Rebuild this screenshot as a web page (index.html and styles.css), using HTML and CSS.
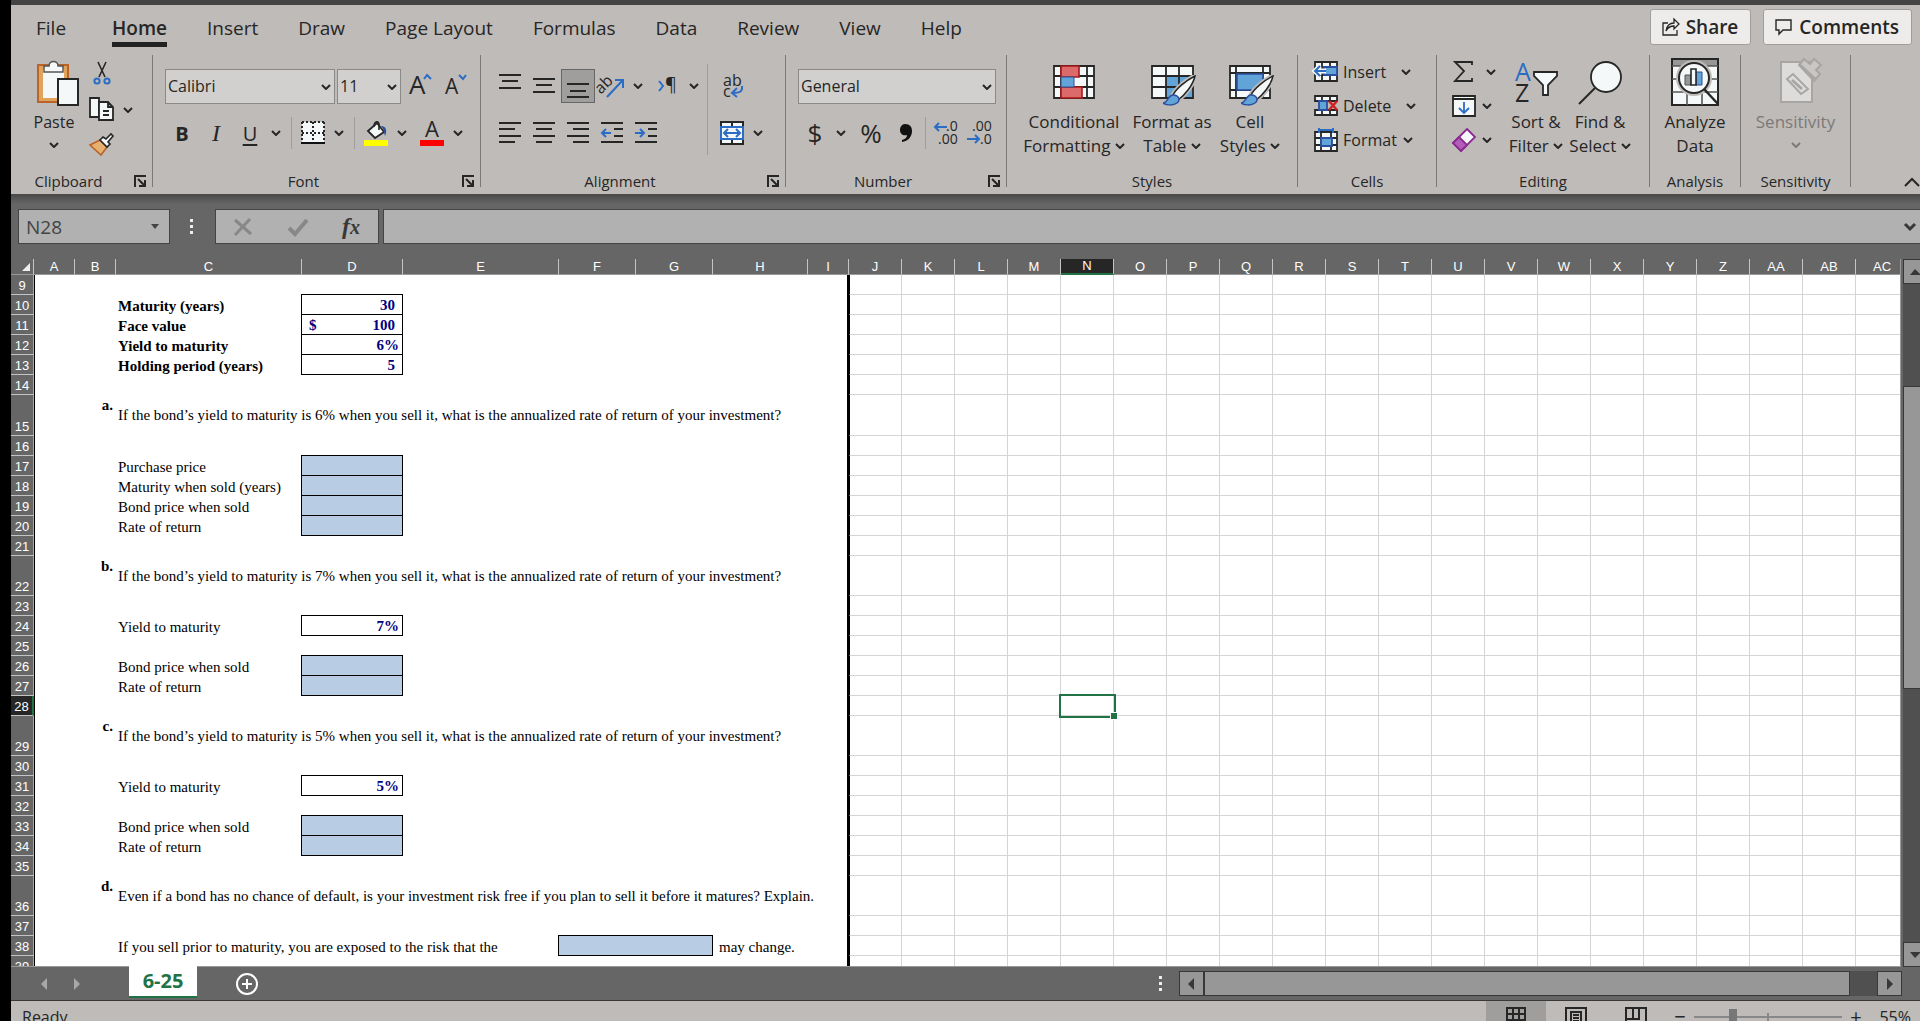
FILE: index.html
```html
<!DOCTYPE html>
<html lang="en">
  <head>
    <meta charset="UTF-8">
    <meta name="viewport" content="width=device-width, initial-scale=1">
    <title>6-25</title>
    <link rel="stylesheet" href="styles.css">
  </head>
  <body>
    <svg class="sprite">
      <symbol id="chev" viewBox="0 0 10 6"><path d="M1 1l4 4 4-4" fill="none" stroke="currentColor" stroke-width="2"/></symbol>
      <symbol id="launch" viewBox="0 0 12 12"><path d="M1 12V1h11M4 4l6 6M11 5v6H5" fill="none" stroke="#262626" stroke-width="2"/></symbol>
      <symbol id="brush" viewBox="0 0 34 32">
        <path d="M32 1C22 6 13 14 10 20l5 5C22 20 30 10 32 1z" fill="#f4f8f8" stroke="#bfbbb8" stroke-width="5"/>
        <path d="M32 1C22 6 13 14 10 20l5 5C22 20 30 10 32 1z" fill="#f4f8f8" stroke="#262626" stroke-width="1.5"/>
        <path d="M0 28c5 0 5-9 11-8 6 1 6 6 3 8-4 3-11 2-14 0z" fill="#62a3d8" stroke="#2b50a0" stroke-width="1.5"/>
      </symbol>
    </svg>

    <div id="app">
      <div id="ribbon">
        <nav class="tabs">
          <a href="#" class="file">File</a>
          <a href="#" class="active">Home</a>
          <a href="#">Insert</a>
          <a href="#">Draw</a>
          <a href="#">Page Layout</a>
          <a href="#">Formulas</a>
          <a href="#">Data</a>
          <a href="#">Review</a>
          <a href="#">View</a>
          <a href="#">Help</a>
          <div class="tab-actions">
            <button><svg width="18" height="18" fill="none" stroke="#262626" stroke-width="1.3"><path d="M6 5H1v12h14v-5M4 13c1-6 4-8 8-8V1l5 5-5 5V8c-4 0-6 1-8 5z"/></svg>Share</button>
            <button><svg width="18" height="18" fill="none" stroke="#262626" stroke-width="1.4"><path d="M1 2h15v10H8l-4 4v-4H1z"/></svg>Comments</button>
          </div>
        </nav>

        <div class="groups">
          <section class="group clipboard">
            <div class="body">
              <button class="big paste">
                <svg class="icon48" viewBox="0 0 48 48">
                  <path d="M8 7h30v37H8z" fill="#e0a35c" stroke="#b8642a" stroke-width="2"/>
                  <path d="M13 11h21v29H13z" fill="#f4f8f8"/>
                  <path d="M14 14V8h5c0-6 9-6 9 0h5v6z" fill="#f4f8f8" stroke="#555" stroke-width="1.5"/>
                  <path d="M28 21h20v26H28z" fill="#f4f8f8" stroke="#262626" stroke-width="2"/>
                </svg>
                <span>Paste</span>
                <svg class="chev"><use href="#chev"/></svg>
              </button>
              <div class="stack small">
                <button aria-label="Cut"><svg width="18" height="26" fill="none" stroke-width="1.6"><path d="M5 2l7 15M13 2L6 17" stroke="#262626"/><g stroke="#2b6cc4" stroke-width="2"><circle cx="4" cy="21" r="2.6"/><circle cx="14" cy="21" r="2.6"/></g></svg></button>
                <button aria-label="Copy"><svg width="26" height="26" fill="#f4f8f8" stroke="#262626" stroke-width="1.8"><path d="M1 2h9v19H1z"/><path d="M10 6h9l5 5v13H10zM19 6v5h5M14 15h6M14 19h6"/></svg></button>
                <button aria-label="Format painter"><svg width="26" height="24" stroke-width="1.6"><path d="M1 12l10-5 7 7-6 8z" fill="#e8b070" stroke="#b8642a"/><path d="M11 7l3-3 3 2 5-5 2 2-5 6 2 2-3 3z" fill="#f4f8f8" stroke="#262626"/></svg></button>
              </div>
              <svg class="chev copy-chev"><use href="#chev"/></svg>
            </div>
            <footer><span>Clipboard</span><svg class="launch"><use href="#launch"/></svg></footer>
          </section>

          <section class="group font">
            <div class="body rows">
              <div class="row combos">
                <div class="combo font-name"><select aria-label="Font"><option>Calibri</option></select><svg class="chev"><use href="#chev"/></svg></div>
                <div class="combo font-size"><select aria-label="Font size"><option>11</option></select><svg class="chev"><use href="#chev"/></svg></div>
                <button class="tool"><svg width="26" height="26"><text x="2" y="21" font-size="26">A</text><path d="M17 6l3-4 4 4" fill="none" stroke="#2b6cc4" stroke-width="2"/></svg></button>
                <button class="tool"><svg width="26" height="26"><text x="2" y="21" font-size="21">A</text><path d="M16 2l4 4 3-4" fill="none" stroke="#2b6cc4" stroke-width="2"/></svg></button>
              </div>
              <div class="row">
                <button class="tool bold">B</button>
                <button class="tool italic">I</button>
                <button class="tool under">U</button>
                <svg class="chev"><use href="#chev"/></svg>
                <i class="sep"></i>
                <button class="tool" aria-label="Borders"><svg width="24" height="24"><path d="M1 1h22v22H1z" fill="#f4f8f8"/><path d="M1 1h22M1 12h22M1 1v20M12 1v20M23 1v20" stroke="#262626" stroke-width="2" stroke-dasharray="2 2"/><path d="M0 22h24" stroke="#111" stroke-width="2"/></svg></button>
                <svg class="chev"><use href="#chev"/></svg>
                <i class="sep"></i>
                <button class="tool" aria-label="Fill color"><svg width="24" height="26"><path d="M4 11l9-8 7 9-9 6z" fill="#f4f8f8" stroke="#262626" stroke-width="1.8"/><path d="M10 7c0-6 5-7 5-2v5" fill="none" stroke="#262626" stroke-width="1.6"/><path d="M17 6c6 0 6 6 4 10-1-4-1-7-4-10z" fill="#2b50a0"/><path d="M0 20h24v6H0z" fill="#ff0"/></svg></button>
                <svg class="chev"><use href="#chev"/></svg>
                <button class="tool color"><svg width="24" height="26"><text x="5" y="17" font-size="22">A</text><path d="M0 20h24v6H0z" fill="red"/></svg></button>
                <svg class="chev"><use href="#chev"/></svg>
              </div>
            </div>
            <footer><span>Font</span><svg class="launch"><use href="#launch"/></svg></footer>
          </section>

          <section class="group alignment">
            <div class="body">
              <div class="rows">
                <div class="row">
                  <button class="tool" aria-label="Top align"><svg class="lines" width="22" height="24"><path d="M0 1h22M3 7h16M0 14h22"/></svg></button>
                  <button class="tool" aria-label="Middle align"><svg class="lines" width="22" height="24"><path d="M0 5h22M3 11h16M0 18h22"/></svg></button>
                  <button class="tool pressed" aria-label="Bottom align"><svg class="lines" width="22" height="24"><path d="M0 10h22M3 17h16M0 23h22"/></svg></button>
                  <button class="tool"><svg width="26" height="26"><text x="-2" y="15" font-size="16" transform="rotate(-45 8 14)">ab</text><path d="M8 24L23 8M16 7h8v8" fill="none" stroke="#2b6cc4" stroke-width="2"/></svg></button>
                  <svg class="chev"><use href="#chev"/></svg>
                  <button class="tool rtl"><svg width="20" height="20"><path d="M1 5l4 5-4 5" fill="none" stroke="#2b6cc4" stroke-width="2"/><text x="7" y="15" font-size="18">¶</text></svg></button>
                  <svg class="chev"><use href="#chev"/></svg>
                </div>
                <div class="row">
                  <button class="tool" aria-label="Align left"><svg class="lines" width="22" height="22"><path d="M0 1h22M0 7h16M0 14h22M0 20h16"/></svg></button>
                  <button class="tool" aria-label="Center"><svg class="lines" width="22" height="22"><path d="M0 1h22M3 7h16M0 14h22M3 20h16"/></svg></button>
                  <button class="tool" aria-label="Align right"><svg class="lines" width="22" height="22"><path d="M0 1h22M6 7h16M0 14h22M6 20h16"/></svg></button>
                  <button class="tool" aria-label="Decrease indent"><svg class="lines" width="22" height="22"><path d="M0 1h22M13 7h9M13 14h9M0 20h22"/><path class="blue" d="M10 11H1M5 7l-4 4 4 4"/></svg></button>
                  <button class="tool" aria-label="Increase indent"><svg class="lines" width="22" height="22"><path d="M0 1h22M13 7h9M13 14h9M0 20h22"/><path class="blue" d="M0 11h9M5 7l4 4-4 4"/></svg></button>
                </div>
              </div>
              <i class="sep tall"></i>
              <div class="rows wrap">
                <div class="row">
                  <button class="tool"><svg width="24" height="26"><text x="3" y="13" font-size="16">ab</text><text x="3" y="24" font-size="16">c</text><path d="M22 13c1 6-3 7-9 7M17 15l-5 5 5 4" fill="none" stroke="#2b6cc4" stroke-width="2"/></svg></button>
                </div>
                <div class="row">
                  <button class="tool" aria-label="Merge and center"><svg width="24" height="24" fill="#f4f8f8" stroke="#262626" stroke-width="2"><path d="M1 1h22v22H1zM12 1v22"/><path d="M1 6h22v12H1z" stroke="#2b6cc4"/><path d="M4 12h16M8 8l-4 4 4 4M16 8l4 4-4 4" fill="none" stroke="#2b6cc4"/></svg></button>
                  <svg class="chev"><use href="#chev"/></svg>
                </div>
              </div>
            </div>
            <footer><span>Alignment</span><svg class="launch"><use href="#launch"/></svg></footer>
          </section>

          <section class="group number">
            <div class="body rows">
              <div class="row combos">
                <div class="combo format"><select aria-label="Number format"><option>General</option></select><svg class="chev"><use href="#chev"/></svg></div>
              </div>
              <div class="row">
                <button class="tool glyph">$</button>
                <svg class="chev"><use href="#chev"/></svg>
                <button class="tool glyph percent-style">%</button>
                <button class="tool" aria-label="Comma style"><svg width="14" height="20"><path d="M6 1c5 0 7 3 7 7 0 6-4 10-10 11v-2c3-1 5-2 5-5C4 13 1 11 1 7c0-3 2-6 5-6z" fill="#111"/></svg></button>
                <i class="sep"></i>
                <button class="tool"><svg width="26" height="26"><text x="13" y="11" font-size="14">.0</text><text x="5" y="24" font-size="14">.00</text><path d="M14 7H2M6 3L2 7l4 4" fill="none" stroke="#2b6cc4" stroke-width="2"/></svg></button>
                <button class="tool"><svg width="26" height="26"><text x="5" y="11" font-size="14">.00</text><text x="13" y="24" font-size="14">.0</text><path d="M0 19h12M8 15l4 4-4 4" fill="none" stroke="#2b6cc4" stroke-width="2"/></svg></button>
              </div>
            </div>
            <footer><span>Number</span><svg class="launch"><use href="#launch"/></svg></footer>
          </section>

          <section class="group styles">
            <div class="body">
              <button class="big conditional">
                <svg class="icon48" viewBox="0 0 48 48">
                  <path d="M4 8h40v32H4zM4 18h40M4 29h40M11 8v32M37 8v32" fill="#f4f8f8" stroke="#262626" stroke-width="1.8"/>
                  <path d="M11 8h18v11H11zM11 29h21v11H11z" fill="#dc6a6a" stroke="#a81818" stroke-width="1.6"/>
                  <path d="M11 19h13v10H11z" fill="#62a3d8" stroke="#2b50a0"/>
                </svg>
                <span>Conditional</span>
                <span>Formatting <svg class="chev"><use href="#chev"/></svg></span>
              </button>
              <button class="big as-table">
                <svg class="icon48" viewBox="0 0 48 48">
                  <path d="M4 8h41v32H4z" fill="#f4f8f8"/><path d="M18 18h27v22H18z" fill="#62a3d8"/>
                  <path d="M4 8h41v32H4zM4 18h41M4 29h41M18 8v32M31 8v32" fill="none" stroke="#262626" stroke-width="1.8"/>
                  <use href="#brush" x="15" y="17" width="34" height="32"/>
                </svg>
                <span>Format as</span>
                <span>Table <svg class="chev"><use href="#chev"/></svg></span>
              </button>
              <button class="big cell-styles">
                <svg class="icon48" viewBox="0 0 48 48">
                  <path d="M4 8h40v32H4zM4 15h40M4 32h40M10 8v32M37 8v32" fill="#f4f8f8" stroke="#262626" stroke-width="1.8"/>
                  <path d="M11 16h26v16H11z" fill="#62a3d8" stroke="#2b50a0" stroke-width="1.6"/>
                  <use href="#brush" x="15" y="17" width="34" height="32"/>
                </svg>
                <span>Cell</span>
                <span>Styles <svg class="chev"><use href="#chev"/></svg></span>
              </button>
            </div>
            <footer><span>Styles</span></footer>
          </section>

          <section class="group cells">
            <div class="body">
              <div class="stack">
                <button><svg width="25" height="24" fill="#f4f8f8" stroke="#262626" stroke-width="1.8"><path d="M1 2h22v19H1zM1 8h22M1 15h22M8 2v19M16 2v19"/><path d="M10 7h13v8H10z" fill="#62a3d8" stroke="#2b50a0"/><path d="M12 11H1M6 6l-5 5 5 5" fill="none" stroke="#f4f8f8" stroke-width="5"/><path d="M12 11H1M6 6l-5 5 5 5" fill="none" stroke="#2b6cc4" stroke-width="2"/></svg>Insert<svg class="chev"><use href="#chev"/></svg></button>
                <button><svg width="25" height="24" fill="#f4f8f8" stroke="#262626" stroke-width="1.8"><path d="M1 2h22v5H1zM1 16h22v5H1zM8 2v5M16 2v5M8 16v5M16 16v5"/><path d="M5 7h8v9H5z" fill="#62a3d8" stroke="#2b50a0"/><path d="M15 7l8 9M23 7l-8 9" stroke="#d02020" stroke-width="2.5"/></svg>Delete<svg class="chev"><use href="#chev"/></svg></button>
                <button class="tight"><svg width="25" height="26" fill="#f4f8f8" stroke="#262626" stroke-width="1.8"><path d="M1 5h22v19H1zM1 11h22M1 18h22M7 5v19M17 5v19"/><path d="M7 11h11v8H7z" fill="#62a3d8" stroke="#2b50a0"/><path d="M5 1v5M19 1v5M5 3h14" stroke="#2b6cc4" stroke-width="2"/></svg>Format<svg class="chev"><use href="#chev"/></svg></button>
              </div>
            </div>
            <footer><span>Cells</span></footer>
          </section>

          <section class="group editing">
            <div class="body">
              <div class="stack icons">
                <button class="sum" aria-label="AutoSum"><svg width="24" height="24"><path d="M20 5V2H3l9 9-9 10h17v-3" fill="none" stroke="#262626" stroke-width="1.8"/></svg><svg class="chev"><use href="#chev"/></svg></button>
                <button aria-label="Fill"><svg width="24" height="22" fill="#f4f8f8" stroke="#262626" stroke-width="1.8"><path d="M1 1h22v20H1zM1 4h22"/><path d="M12 7v11M7 13l5 5 5-5" fill="none" stroke="#2b6cc4"/></svg><svg class="chev"><use href="#chev"/></svg></button>
                <button aria-label="Clear"><svg width="24" height="24" fill="#f4f8f8" stroke="#8a2a90" stroke-width="1.8"><path d="M15 1l8 8L9 23l-8-8z"/><path d="M7 9l8 8-6 6-8-8z" fill="#b45cba"/></svg><svg class="chev"><use href="#chev"/></svg></button>
              </div>
              <button class="big sort">
                <svg class="icon48" viewBox="0 0 48 48"><text class="blue-text" x="3" y="23" font-size="25">A</text><text x="3" y="44" font-size="25">Z</text><path d="M22 14h23v4l-9 9v10h-5V27l-9-9z" fill="#f4f8f8" stroke="#262626" stroke-width="1.8"/></svg>
                <span>Sort &amp;</span>
                <span>Filter <svg class="chev"><use href="#chev"/></svg></span>
              </button>
              <button class="big find">
                <svg class="icon48" viewBox="0 0 48 48"><circle cx="30" cy="19" r="15" fill="#f4f8f8" stroke="#262626" stroke-width="1.8"/><path d="M19 30L3 46" stroke="#262626" stroke-width="2"/></svg>
                <span>Find &amp;</span>
                <span>Select <svg class="chev"><use href="#chev"/></svg></span>
              </button>
            </div>
            <footer><span>Editing</span></footer>
          </section>

          <section class="group analysis">
            <div class="body">
              <button class="big">
                <svg class="icon48" viewBox="0 0 48 48">
                  <path d="M1 1h46v46H1z" fill="#f4f8f8" stroke="#262626" stroke-width="2"/><path d="M2 2h44v6H2z" fill="#979797"/>
                  <path d="M1 8h46M1 21h46M1 34h46M16 34v13M31 34v13" stroke="#555" stroke-width="1.6"/>
                  <circle cx="23" cy="20" r="18" fill="#bfbbb8"/><circle cx="23" cy="20" r="15" fill="#f4f8f8" stroke="#262626" stroke-width="2"/>
                  <path d="M33 31l14 15" stroke="#262626" stroke-width="2.5"/>
                  <path d="M14 17h6v10h-6z" fill="#979797" stroke="#555"/><path d="M25 14h6v13h-6z" fill="#62a3d8" stroke="#2b50a0"/><path d="M20 11h5v16h-5z" fill="#f4f8f8" stroke="#262626" stroke-width="1.6"/>
                </svg>
                <span>Analyze</span>
                <span>Data</span>
              </button>
            </div>
            <footer><span>Analysis</span></footer>
          </section>

          <section class="group sensitivity">
            <div class="body">
              <button class="big" disabled>
                <svg class="icon48" viewBox="0 0 48 48" stroke="#a8a6a4" stroke-width="2">
                  <path d="M9 4h31v40H9z" fill="#dedcdb"/>
                  <path d="M15 21l6-5 15 15-7 5z" fill="#dedcdb"/><path d="M20 22l10 9" stroke-width="3"/>
                  <path d="M27 7l5-6 6 5 4-5 7 6-5 5 4 4-6 7z" fill="#c9c7c5"/><path d="M28 7l15 14" stroke-width="3"/>
                </svg>
                <span>Sensitivity</span>
                <svg class="chev"><use href="#chev"/></svg>
              </button>
            </div>
            <footer><span>Sensitivity</span></footer>
          </section>
          <button class="collapse" aria-label="Collapse the ribbon"><svg width="16" height="10"><path d="M1 9l7-7 7 7" fill="none" stroke="#262626" stroke-width="2"/></svg></button>
        </div>
      </div>

      <div id="formula-bar">
        <div class="name-box">
          <input type="text" value="N28" aria-label="Name box">
          <svg width="8" height="5"><path d="M0 0h8L4 5z" fill="#444"/></svg>
        </div>
        <div class="dots"><i></i><i></i><i></i></div>
        <div class="fx">
          <button aria-label="Cancel"><svg width="18" height="18"><path d="M1 2l16 14M16 1L1 17" stroke="#888" stroke-width="3"/></svg></button>
          <button aria-label="Enter"><svg width="20" height="18"><path d="M1 10l6 6L19 2" fill="none" stroke="#888" stroke-width="4"/></svg></button>
          <button class="fn" aria-label="Insert function">f<small>x</small></button>
        </div>
        <div class="formula">
          <input type="text" aria-label="Formula">
          <svg width="12" height="8"><path d="M1 1l5 5 5-5" fill="none" stroke="#383838" stroke-width="3"/></svg>
        </div>
      </div>

      <div id="sheet">
        <div class="grid"><table id="cells"></table></div>
        <div class="vscroll">
          <button aria-label="Scroll up"><svg width="11" height="6"><path d="M0 6h11L5 0z"/></svg></button>
          <div class="track"><div class="thumb"></div></div>
          <button aria-label="Scroll down"><svg width="11" height="6"><path d="M0 0h11L5 6z"/></svg></button>
        </div>
      </div>

      <div id="sheet-bar">
        <button class="nav" aria-label="Previous sheet"><svg width="6" height="12"><path d="M6 0v12L0 6z"/></svg></button>
        <button class="nav" aria-label="Next sheet"><svg width="6" height="12"><path d="M0 0v12l6-6z"/></svg></button>
        <a href="#" class="sheet-tab">6-25</a>
        <button class="add" aria-label="New sheet"><svg width="24" height="24" fill="none" stroke="#fff" stroke-width="2"><circle cx="12" cy="12" r="10"/><path d="M12 7v10M7 12h10"/></svg></button>
        <div class="dots"><i></i><i></i><i></i></div>
        <div class="hscroll">
          <button aria-label="Scroll left"><svg width="6" height="12"><path d="M6 0v12L0 6z"/></svg></button>
          <div class="track"><div class="thumb"></div></div>
          <button aria-label="Scroll right"><svg width="6" height="12"><path d="M0 0v12l6-6z"/></svg></button>
        </div>
      </div>

      <div id="status">
        <div class="status-row">
          <span class="ready">Ready</span>
          <button class="view on" aria-label="Normal"><svg width="20" height="20"><path d="M1 1h18v18H1zM7 1v18M13 1v18M1 7h18M1 13h18"/></svg></button>
          <button class="view" aria-label="Page layout"><svg width="22" height="20"><path d="M1 1h20v18H1zM6 19V5h10v14M8 8h6M8 11h6M8 14h6"/></svg></button>
          <button class="view" aria-label="Page break preview"><svg width="22" height="20"><path d="M1 1h20v18H1zM8 1v11M14 1v11H1"/></svg></button>
          <button class="zoom">−</button>
          <input type="range" min="10" max="190" value="55" aria-label="Zoom">
          <button class="zoom">+</button>
          <span class="percent">55%</span>
        </div>
      </div>
    </div>

    <script src="index.js"></script>
  </body>
</html>
```
FILE: styles.css
```css
* {
  box-sizing: border-box;
}

body {
  margin: 0;
  background: #000;
  color: #262626;
  font-family: "Open Sans", "Noto Sans", sans-serif;
  font-size: 16px;
  overflow: hidden;
}

button {
  background: none;
  border: 0;
  padding: 0;
  margin: 0;
  font: inherit;
  color: inherit;
}

svg {
  flex-shrink: 0;
  overflow: visible;
}

svg text {
  fill: #262626;
}

svg .blue-text {
  fill: #2b6cc4;
}

.sprite {
  position: absolute;
  width: 0;
  height: 0;
}

#app {
  display: flex;
  flex-direction: column;
  height: 100vh;
  margin-left: 11px;
  background: #666;
}

/* ribbon */

#ribbon {
  background: #bfbbb8;
  border-top: 5px solid #444;
  height: 194px;
  flex-shrink: 0;
}

.tabs {
  display: flex;
  gap: 40px;
  height: 50px;
  padding: 0 8px 0 25px;
}

.tabs a {
  height: 42px;
  padding-top: 9px;
  line-height: 28px;
  font-size: 19px;
  color: inherit;
  text-decoration: none;
  border-bottom: 5px solid transparent;
  white-space: nowrap;
}

.tabs .file {
  margin-right: 6px;
}

.tabs .active {
  font-weight: 600;
  border-color: #222;
}

.tab-actions {
  display: flex;
  gap: 12px;
  margin-left: auto;
  padding-top: 4px;
}

.tab-actions button {
  display: flex;
  align-items: center;
  gap: 6px;
  height: 36px;
  padding: 0 12px 0 11px;
  background: #edecea;
  border: 1px solid #a09e9c;
  border-radius: 3px;
  font-size: 19px;
  font-weight: 600;
}

.groups {
  display: flex;
  height: 132px;
}

.group {
  display: flex;
  flex-direction: column;
  flex-shrink: 0;
  border-right: 1px solid #7c7a78;
}

.group .body {
  flex: 1;
  display: flex;
  align-items: flex-start;
}

.group footer {
  display: flex;
  height: 14px;
  line-height: 16px;
  font-size: 15px;
}

.group footer span {
  flex: 1;
  text-align: center;
}

.launch {
  width: 12px;
  height: 12px;
  margin: 2px 6px 0 8px;
}

.clipboard { width: 142px; }
.font { width: 328px; }
.alignment { width: 305px; }
.number { width: 221px; }
.styles { width: 291px; }
.cells { width: 139px; }
.editing { width: 213px; }
.analysis { width: 91px; }
.sensitivity { width: 110px; }

.chev {
  width: 10px;
  height: 6px;
}

.row > .chev {
  margin: 0 4px;
}

.group .rows {
  display: flex;
  flex-direction: column;
  gap: 13px;
  padding: 14px 0 0 12px;
}

.row {
  display: flex;
  align-items: center;
  height: 34px;
}

.combos {
  gap: 2px;
}

.tool {
  display: flex;
  align-items: center;
  justify-content: center;
  width: 34px;
  height: 34px;
  font-size: 20px;
}

.bold { font-weight: 700; }
.italic { font-family: "Liberation Serif", serif; font-style: italic; font-size: 24px; }
.under { text-decoration: underline; text-underline-offset: 3px; }
.color { margin-left: 4px; }
.rtl { margin-left: 4px; }
.glyph { font-size: 26px; }
.percent-style { margin: 0 1px 0 4px; }

.pressed {
  background: #9f9e9c;
  border: 1px solid #666;
}

.sep {
  width: 1px;
  height: 32px;
  margin: 0 4px 0 6px;
  background: #a09e9c;
}

.number .sep {
  margin: 0 3px 0 2px;
}

.sep.tall {
  height: 91px;
  margin: 9px 0 0 4px;
}

.alignment .wrap {
  padding-left: 7px;
}

.lines {
  fill: none;
  stroke: #262626;
  stroke-width: 2;
}

.lines .blue {
  stroke: #2b6cc4;
}

.combo {
  position: relative;
}

.combo .chev {
  position: absolute;
  right: 4px;
  top: 15px;
  pointer-events: none;
}

.combo select {
  appearance: none;
  width: 100%;
  height: 35px;
  padding: 0 2px;
  background: #d1d0ce;
  border: 1px solid #8c8a88;
  border-radius: 0;
  font: inherit;
  color: inherit;
}

.font-name { width: 170px; }
.font-size { width: 64px; }
.format { width: 198px; }

.big {
  display: flex;
  flex-direction: column;
  align-items: center;
  padding-top: 3px;
  font-size: 17px;
  line-height: 24px;
  white-space: nowrap;
}

.big:disabled {
  color: #7c7a78;
}

.big > .chev {
  margin-top: 8px;
}

.big span .chev {
  margin-bottom: 3px;
}

.icon48 {
  width: 48px;
  height: 48px;
  margin-bottom: 4px;
}

.paste { width: 48px; margin-left: 19px; font-size: 16px; }
.conditional { width: 108px; margin-left: 13px; }
.as-table { width: 88px; }
.cell-styles { width: 68px; }
.sort { width: 62px; margin-left: 9px; }
.find { width: 66px; }
.analysis .big, .sensitivity .big { width: 100%; }

.stack {
  display: flex;
  flex-direction: column;
}

.stack button {
  display: flex;
  align-items: center;
  height: 34px;
}

.small {
  margin-left: 11px;
  width: 26px;
}

.small button {
  height: 36px;
  justify-content: center;
}

.copy-chev {
  margin: 52px 0 0 8px;
}

.cells .stack {
  margin-left: 16px;
}

.cells .chev { margin-left: 15px; }
.cells .tight .chev { margin-left: 6px; }

.cells button svg:first-child {
  margin-right: 4px;
}

.icons {
  margin-left: 15px;
}

.icons .chev {
  margin-left: 6px;
}

.icons .sum .chev {
  margin-left: 10px;
}

.collapse {
  display: flex;
  align-items: flex-end;
  margin-left: auto;
}

/* formula bar */

#formula-bar {
  display: flex;
  flex-shrink: 0;
  height: 65px;
  padding: 15px 0;
  background: linear-gradient(#484848, #666 10px);
}

.name-box, .fx, .formula {
  display: flex;
  align-items: center;
  background: #b1b1b1;
  border: 1px solid #444;
}

#formula-bar input {
  flex: 1;
  min-width: 0;
  padding: 0 7px;
  background: none;
  border: 0;
  outline: none;
  font: inherit;
  font-size: 19px;
  color: #444;
}

.name-box {
  width: 152px;
  margin-left: 7px;
  padding-right: 10px;
}

.dots {
  display: flex;
  flex-direction: column;
  justify-content: center;
  gap: 3px;
}

.dots i {
  width: 3px;
  height: 3px;
  background: #eee;
}

#formula-bar .dots {
  margin: 0 22px 0 20px;
}

.fx {
  width: 164px;
  padding-left: 18px;
}

.fx button {
  width: 20px;
  margin-right: 34px;
  display: flex;
}

.fx .fn {
  margin: 0;
  align-items: baseline;
  font-family: "Liberation Serif", serif;
  font-style: italic;
  font-weight: 700;
  font-size: 24px;
  color: #383838;
}

.fn small {
  font-size: 20px;
}

.formula {
  flex: 1;
  margin-left: 4px;
  padding-right: 4px;
  border-right: 0;
}

/* sheet */

#sheet {
  flex: 1;
  display: flex;
  min-height: 0;
}

.grid {
  flex: 1;
  min-width: 0;
  overflow: hidden;
  background: #fff;
  border-right: 1px solid #999;
  border-bottom: 1px solid #999;
}

#cells {
  table-layout: fixed;
  border-collapse: separate;
  border-spacing: 0;
  width: 1898px;
  font-family: "Liberation Serif", serif;
  font-size: 15px;
  line-height: 17px;
  color: #000;
}

#cells th {
  padding: 0;
  background: #666;
  color: #fff;
  font-family: "Liberation Sans", sans-serif;
  font-size: 13px;
  font-weight: 400;
}

#cells thead th {
  height: 16px;
  line-height: 15px;
  border-right: 1px solid #c4c4c4;
  border-bottom: 1px solid #999;
}

#cells thead .current {
  background: #262626;
  border-bottom: 2px solid #217346;
  line-height: 14px;
}

.corner svg {
  display: block;
  margin-left: 11px;
}

#cells tbody th {
  line-height: 16px;
  vertical-align: bottom;
  border-right: 1px solid #aaa;
  border-bottom: 1px solid #c4c4c4;
}

#cells tbody .current {
  background: #262626;
  border-right: 2px solid #217346;
}

#cells tr { height: 20px; }
#cells .head { height: 16px; }
#cells .tall { height: 40px; }
#cells .taller { height: 41px; }

#cells td {
  position: relative;
  padding: 0 3px 0 2px;
  vertical-align: bottom;
  white-space: nowrap;
}

#cells .edge {
  border-left: 1px solid #000;
}

#cells .line {
  border-right: 1px solid #d4d4d4;
  border-bottom: 1px solid #d4d4d4;
}

#cells .print-end {
  border-right: 2px solid #000;
}

#cells .print-start {
  border-left: 1px solid #000;
}

#cells .strong {
  font-weight: 700;
}

#cells .letter {
  padding-top: 2px;
  font-weight: 700;
  text-align: right;
  vertical-align: top;
}

#cells .question {
  vertical-align: middle;
}

#cells .after {
  padding-left: 6px;
}

#cells .box {
  border-right: 1px solid #000;
  border-bottom: 1px solid #000;
  box-shadow: -1px 0 #000, 0 -1px #000, -1px -1px #000;
  font-weight: 700;
  text-align: right;
  color: #000080;
}

#cells .count {
  padding-right: 7px;
}

#cells .money span {
  float: left;
  margin-left: 5px;
}

#cells .answer {
  background: #b8cce4;
}

.selection {
  position: absolute;
  z-index: 1;
  inset: -2px -3px -3px -2px;
  border: 2px solid #217346;
}

.selection i {
  position: absolute;
  right: -4px;
  bottom: -4px;
  width: 8px;
  height: 8px;
  background: #217346;
  border: 1px solid #fff;
}

.track {
  flex: 1;
  display: flex;
  background: #505050;
}

.thumb, .vscroll button, .hscroll button {
  background: #979797;
  border: 1px solid #383838;
}

.vscroll button, .hscroll button {
  display: flex;
  flex-shrink: 0;
  align-items: center;
  justify-content: center;
  width: 25px;
  height: 25px;
}

.vscroll svg, .hscroll svg {
  fill: #383838;
}

.vscroll {
  display: flex;
  flex-direction: column;
  width: 17px;
  margin-left: 2px;
}

.vscroll .track {
  flex-direction: column;
}

.vscroll .track::before {
  content: "";
  height: 15.5%;
}

.vscroll .thumb {
  width: 25px;
  height: 46%;
}

/* sheet tabs */

#sheet-bar {
  display: flex;
  align-items: center;
  flex-shrink: 0;
  height: 34px;
  padding: 0 18px 0 3px;
  border-bottom: 1px solid #383838;
}

.nav {
  display: flex;
  margin-left: 27px;
}

.nav svg {
  fill: #a8a8a8;
}

.sheet-tab {
  align-self: flex-start;
  width: 68px;
  height: 32px;
  margin: -1px 0 0 49px;
  background: #fff;
  border-bottom: 2px solid #217346;
  color: #217346;
  font-size: 20px;
  font-weight: 700;
  line-height: 30px;
  text-align: center;
  text-decoration: none;
}

.add {
  display: flex;
  margin-left: 38px;
}

#sheet-bar .dots {
  margin-left: auto;
}

.hscroll {
  display: flex;
  width: 38.3%;
  margin-left: 17px;
}

.hscroll .thumb {
  width: 96%;
}

/* status bar */

#status {
  flex-shrink: 0;
  height: 20px;
  overflow: hidden;
  background: #bfbbb8;
}

.status-row {
  display: flex;
  align-items: center;
  height: 32px;
  padding: 0 9px 0 11px;
}

.ready {
  margin-right: auto;
  line-height: 32px;
}

.view {
  display: flex;
  align-items: center;
  justify-content: center;
  width: 60px;
  height: 32px;
}

.view.on {
  background: #9f9e9c;
}

.view svg {
  fill: none;
  stroke: #262626;
  stroke-width: 2;
}

.zoom {
  width: 28px;
  font-size: 20px;
  line-height: 30px;
}

.status-row input {
  appearance: none;
  width: 148px;
  height: 16px;
  margin: 0;
  background: linear-gradient(#888, #888) center / 100% 2px no-repeat,
    linear-gradient(#888, #888) center / 2px 8px no-repeat;
}

.status-row input::-webkit-slider-thumb {
  appearance: none;
  width: 8px;
  height: 16px;
  background: #777;
}

.percent {
  width: 41px;
  text-align: right;
}
```
FILE: index.js
```js
const columns = [
  ['A', 41], ['B', 41], ['C', 186], ['D', 101], ['E', 156],
  ['F', 77], ['G', 77], ['H', 95], ['I', 41]
];
for (const name of 'J K L M N O P Q R S T U V W X Y Z AA AB AC'.split(' ')) {
  columns.push([name, 53]);
}

const question = rate => `If the bond’s yield to maturity is ${rate} when you sell it, what is the annualized rate of return of your investment?`;

// row -> column -> [text, class, colspan]
const data = {
  10: { C: ['Maturity (years)', 'strong'], D: ['30', 'box count'] },
  11: { C: ['Face value', 'strong'], D: ['<span>$</span>100', 'box count money'] },
  12: { C: ['Yield to maturity', 'strong'], D: ['6%', 'box'] },
  13: { C: ['Holding period (years)', 'strong'], D: ['5', 'box count'] },
  15: { B: ['a.', 'letter'], C: [question('6%'), 'question'] },
  17: { C: ['Purchase price'], D: ['', 'box answer'] },
  18: { C: ['Maturity when sold (years)'], D: ['', 'box answer'] },
  19: { C: ['Bond price when sold'], D: ['', 'box answer'] },
  20: { C: ['Rate of return'], D: ['', 'box answer'] },
  22: { B: ['b.', 'letter'], C: [question('7%'), 'question'] },
  24: { C: ['Yield to maturity'], D: ['7%', 'box'] },
  26: { C: ['Bond price when sold'], D: ['', 'box answer'] },
  27: { C: ['Rate of return'], D: ['', 'box answer'] },
  28: { N: ['<div class="selection"><i></i></div>'] },
  29: { B: ['c.', 'letter'], C: [question('5%'), 'question'] },
  31: { C: ['Yield to maturity'], D: ['5%', 'box'] },
  33: { C: ['Bond price when sold'], D: ['', 'box answer'] },
  34: { C: ['Rate of return'], D: ['', 'box answer'] },
  36: { B: ['d.', 'letter'], C: ['Even if a bond has no chance of default, is your investment risk free if you plan to sell it before it matures? Explain.', 'question'] },
  38: { C: ['If you sell prior to maturity, you are exposed to the risk that the'], F: ['', 'box answer', 2], H: ['may change.', 'after'] }
};

const heights = { 15: 'taller', 22: 'tall', 29: 'tall', 36: 'tall' };

let html = '<colgroup><col style="width:23px">';
html += columns.map(([, width]) => `<col style="width:${width}px">`).join('');
html += '</colgroup><thead><tr class="head"><th class="corner"><svg width="8" height="8"><path d="M8 0v8H0z" fill="#eee"/></svg></th>';
html += columns.map(([name]) => `<th${name === 'N' ? ' class="current"' : ''}>${name}</th>`).join('');
html += '</tr></thead><tbody>';

for (let row = 9; row <= 39; row++) {
  html += `<tr class="${heights[row] || ''}"><th${row === 28 ? ' class="current"' : ''}>${row}</th>`;
  for (let i = 0; i < columns.length; i++) {
    const name = columns[i][0];
    const [text = '', style = '', span = 1] = (data[row] || {})[name] || [];
    const classes = [style];
    if (name === 'A') classes.push('edge');
    if (name === 'I') classes.push('print-end');
    if (name === 'J') classes.push('print-start');
    if (i > 8) classes.push('line');
    html += `<td class="${classes.join(' ').trim()}"${span > 1 ? ` colspan="${span}"` : ''}>${text}</td>`;
    i += span - 1;
  }
  html += '</tr>';
}

document.getElementById('cells').innerHTML = html + '</tbody>';
```
